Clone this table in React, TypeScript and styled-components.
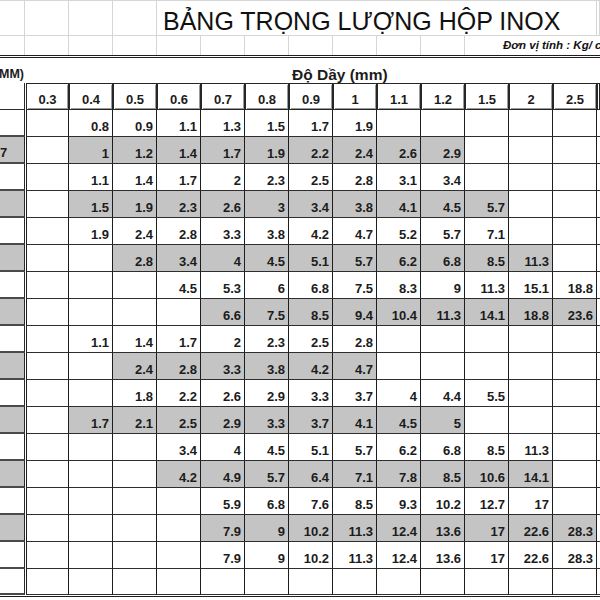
import styled, { createGlobalStyle } from "styled-components";

const GlobalStyle = createGlobalStyle`
  body {
    margin: 0;
    background: #fff;
    overflow: hidden;
  }
  #root {
    width: 600px;
    height: 600px;
  }
`;

const THICKNESS = ["0.3", "0.4", "0.5", "0.6", "0.7", "0.8", "0.9", "1", "1.1", "1.2", "1.5", "2", "2.5"];

type WeightRow = { start: number; values: string[]; label?: string };

// start = index of the first filled thickness column
const ROWS: WeightRow[] = [
  { start: 1, values: ["0.8", "0.9", "1.1", "1.3", "1.5", "1.7", "1.9"] },
  { start: 1, values: ["1", "1.2", "1.4", "1.7", "1.9", "2.2", "2.4", "2.6", "2.9"], label: "7" },
  { start: 1, values: ["1.1", "1.4", "1.7", "2", "2.3", "2.5", "2.8", "3.1", "3.4"] },
  { start: 1, values: ["1.5", "1.9", "2.3", "2.6", "3", "3.4", "3.8", "4.1", "4.5", "5.7"] },
  { start: 1, values: ["1.9", "2.4", "2.8", "3.3", "3.8", "4.2", "4.7", "5.2", "5.7", "7.1"] },
  { start: 2, values: ["2.8", "3.4", "4", "4.5", "5.1", "5.7", "6.2", "6.8", "8.5", "11.3"] },
  { start: 3, values: ["4.5", "5.3", "6", "6.8", "7.5", "8.3", "9", "11.3", "15.1", "18.8"] },
  { start: 4, values: ["6.6", "7.5", "8.5", "9.4", "10.4", "11.3", "14.1", "18.8", "23.6"] },
  { start: 1, values: ["1.1", "1.4", "1.7", "2", "2.3", "2.5", "2.8"] },
  { start: 2, values: ["2.4", "2.8", "3.3", "3.8", "4.2", "4.7"] },
  { start: 2, values: ["1.8", "2.2", "2.6", "2.9", "3.3", "3.7", "4", "4.4", "5.5"] },
  { start: 1, values: ["1.7", "2.1", "2.5", "2.9", "3.3", "3.7", "4.1", "4.5", "5"] },
  { start: 3, values: ["3.4", "4", "4.5", "5.1", "5.7", "6.2", "6.8", "8.5", "11.3"] },
  { start: 3, values: ["4.2", "4.9", "5.7", "6.4", "7.1", "7.8", "8.5", "10.6", "14.1"] },
  { start: 4, values: ["5.9", "6.8", "7.6", "8.5", "9.3", "10.2", "12.7", "17"] },
  { start: 4, values: ["7.9", "9", "10.2", "11.3", "12.4", "13.6", "17", "22.6", "28.3"] },
  { start: 4, values: ["7.9", "9", "10.2", "11.3", "12.4", "13.6", "17", "22.6", "28.3"] },
  { start: 0, values: [] },
];

const BODY_COLS = "25px 1px 43px repeat(12, 44px) 1fr";

export default function App() {
  return (
    <>
      <GlobalStyle />
      <Sheet>
        <TopRow $cols="25px 44px 44px 44px 440px 1fr" $height={36}>
          <Gridcell />
          <Gridcell />
          <Gridcell />
          <Gridcell />
          <Title>BẢNG TRỌNG LƯỢNG HỘP INOX</Title>
          <Gridcell />
        </TopRow>
        <TopRow $cols="25px repeat(10, 44px) 1fr" $height={19} $noLine>
          {Array.from({ length: 11 }).map((_, i) => (
            <Gridcell key={i} />
          ))}
          <Unit>Đơn vị tính : Kg/ c</Unit>
        </TopRow>
        <DoubleRule />
        <CaptionRow>
          <SideCaption>MM)</SideCaption>
          <Caption>Độ Dầy (mm)</Caption>
        </CaptionRow>
        <BodyRow $height={27}>
          <HeadSide />
          <Spacer />
          {THICKNESS.map((t) => (
            <HeadCell key={t}>{t}</HeadCell>
          ))}
          <HeadCell />
        </BodyRow>
        {ROWS.map((row, r) => {
          const shaded = r % 2 === 1 && r < 16;
          const last = r === ROWS.length - 1;
          return (
            <BodyRow key={r} $height={last ? 26 : 27}>
              <SideCell $shaded={shaded}>{row.label}</SideCell>
              <Spacer />
              {THICKNESS.map((_, c) => {
                const v = row.values[c - row.start];
                const filled = c >= row.start && v !== undefined;
                return (
                  <Cell key={c} $first={c === 0} $shaded={shaded && filled}>
                    {filled ? v : ""}
                  </Cell>
                );
              })}
              <Cell />
            </BodyRow>
          );
        })}
        <BottomRule />
      </Sheet>
    </>
  );
}

const Sheet = styled.div`
  width: 600px;
  height: 600px;
  overflow: hidden;
  display: flex;
  flex-direction: column;
  font-family: "Liberation Sans", Arial, sans-serif;
  color: #1c1c1c;
  background: #fff;
`;

const TopRow = styled.div<{ $cols: string; $height: number; $noLine?: boolean }>`
  display: grid;
  grid-template-columns: ${(p) => p.$cols};
  height: ${(p) => p.$height}px;
  box-sizing: border-box;
  border-top: ${(p) => (p.$noLine ? "none" : "1px solid #d6d6d6")};
  border-bottom: ${(p) => (p.$noLine ? "none" : "1px solid #d6d6d6")};
  flex-shrink: 0;
`;

const Gridcell = styled.div`
  border-right: 1px solid #d6d6d6;
`;

const Title = styled.div`
  display: flex;
  align-items: flex-end;
  padding: 0 0 1px 6px;
  border-right: 1px solid #d6d6d6;
  font-size: 25px;
  line-height: 25px;
  white-space: nowrap;
  color: #111;
`;

const Unit = styled.div`
  display: flex;
  align-items: flex-end;
  padding: 0 0 3px 38px;
  font-size: 11.5px;
  font-weight: 700;
  font-style: italic;
  line-height: 13px;
  white-space: nowrap;
  color: #111;
`;

const DoubleRule = styled.div`
  height: 3px;
  box-sizing: border-box;
  border-top: 1px solid #1e1e1e;
  border-bottom: 1px solid #1e1e1e;
  flex-shrink: 0;
`;

const CaptionRow = styled.div`
  display: grid;
  grid-template-columns: 25px 1fr;
  height: 25px;
  flex-shrink: 0;
  font-size: 15.5px;
  font-weight: 700;
  line-height: 17px;
`;

const SideCaption = styled.div`
  display: flex;
  justify-content: flex-end;
  align-items: flex-end;
  white-space: nowrap;
  font-size: 12.5px;
  padding-right: 1px;
`;

const Caption = styled.div`
  display: flex;
  align-items: flex-end;
  padding-left: 267px;
  white-space: nowrap;
`;

const BodyRow = styled.div<{ $height: number }>`
  display: grid;
  grid-template-columns: ${BODY_COLS};
  height: ${(p) => p.$height}px;
  flex-shrink: 0;
`;

const Spacer = styled.div`
  background: #fff;
`;

const HeadSide = styled.div`
  box-sizing: border-box;
  border-right: 1px solid #2a2a2a;
  border-bottom: 1px solid #2a2a2a;
`;

const HeadCell = styled.div`
  box-sizing: border-box;
  display: flex;
  justify-content: center;
  align-items: flex-end;
  padding-bottom: 2px;
  border: 1px solid #262626;
  box-shadow: inset 1px 1px 0 #fff, inset -1px -1px 0 #9a9a9a;
  font-size: 13px;
  font-weight: 700;
  line-height: 15px;
  white-space: nowrap;
  overflow: hidden;
`;

const SideCell = styled.div<{ $shaded: boolean }>`
  box-sizing: border-box;
  display: flex;
  align-items: flex-end;
  padding-bottom: 2px;
  border-right: 1px solid #2a2a2a;
  border-bottom: 2px solid #4a4a4a;
  background: ${(p) => (p.$shaded ? "#c4c4c4" : "#fff")};
  font-size: 13px;
  font-weight: 700;
  line-height: 15px;
  overflow: hidden;
`;

const Cell = styled.div<{ $first?: boolean; $shaded?: boolean }>`
  box-sizing: border-box;
  display: flex;
  justify-content: flex-end;
  align-items: flex-end;
  padding: 0 3px 2px 0;
  border-left: ${(p) => (p.$first ? "1px solid #1e1e1e" : "none")};
  border-right: 1px solid #1e1e1e;
  border-bottom: 1px solid #2e2e2e;
  background: ${(p) => (p.$shaded ? "#c4c4c4" : "#fff")};
  font-size: 13px;
  font-weight: 700;
  line-height: 15px;
  white-space: nowrap;
`;

const BottomRule = styled.div`
  height: 2px;
  box-sizing: border-box;
  border-bottom: 1px solid #1e1e1e;
  flex-shrink: 0;
`;
